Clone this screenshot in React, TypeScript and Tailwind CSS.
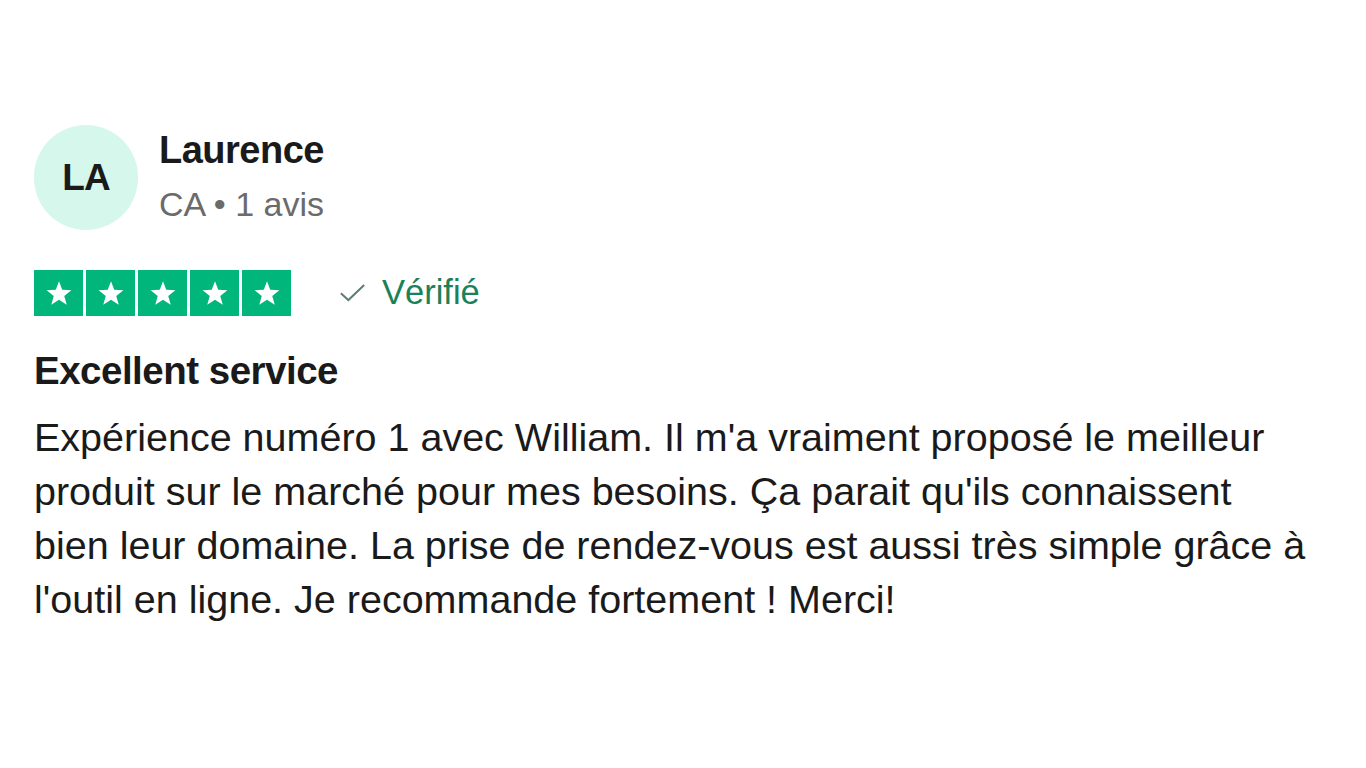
import React from "react";

function Star() {
  return (
    <div className="w-[49px] h-[46px] bg-[#00b67a] flex items-center justify-center">
      <svg viewBox="0 0 24 24" className="w-[30px] h-[30px]">
        <path
          d="M12 2.5l2.6 6.9 7.3.3-5.7 4.6 2 7.1L12 17.3l-6.2 4.1 2-7.1-5.7-4.6 7.3-.3z"
          fill="#ffffff"
        />
      </svg>
    </div>
  );
}

export default function App() {
  return (
    <div
      className="w-[1366px] h-[768px] bg-white text-[#1a1a1a] pl-[34px] pt-[125px]"
      style={{ fontFamily: '"Liberation Sans", Arial, sans-serif' }}
    >
      <div className="flex items-start gap-[21px]">
        <div className="w-[104px] h-[105px] rounded-full bg-[#d6f7ec] flex items-center justify-center">
          <span className="text-[37px] font-bold tracking-[-1px] text-[#1a1a1a]">LA</span>
        </div>
        <div className="flex flex-col pt-[1px]">
          <span className="text-[38px] font-bold leading-[48px] tracking-[-0.5px]">Laurence</span>
          <span className="text-[34px] leading-[44px] text-[#6b6b6b] mt-[8px]">CA • 1 avis</span>
        </div>
      </div>

      <div className="flex items-center mt-[37px]">
        <div className="flex gap-[3px]">
          <Star />
          <Star />
          <Star />
          <Star />
          <Star />
        </div>
        <div className="flex items-center ml-[45px] gap-[13px]">
          <svg viewBox="0 0 24 24" className="w-[33px] h-[33px]" fill="none" stroke="#5a7f6e" strokeWidth="1.4">
            <path d="M3.5 12.5l5.5 5 11.5-11" />
          </svg>
          <span className="text-[34.5px] text-[#1b8159]">Vérifié</span>
        </div>
      </div>

      <h2 className="text-[38.5px] font-bold mt-[28px] leading-[48px] tracking-[-0.5px]">Excellent service</h2>

      <p className="text-[39.5px] leading-[54px] mt-[15px] whitespace-nowrap">
        Expérience numéro 1 avec William. Il m'a vraiment proposé le meilleur
        <br />
        produit sur le marché pour mes besoins. Ça parait qu'ils connaissent
        <br />
        bien leur domaine. La prise de rendez-vous est aussi très simple grâce à
        <br />
        l'outil en ligne. Je recommande fortement ! Merci!
      </p>
    </div>
  );
}
